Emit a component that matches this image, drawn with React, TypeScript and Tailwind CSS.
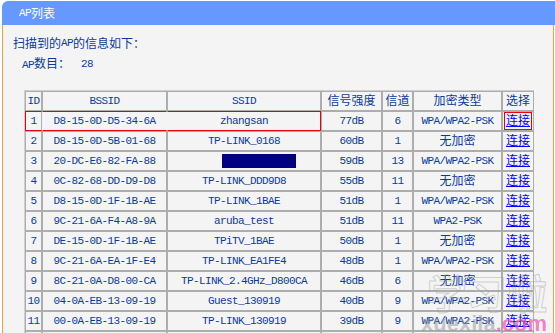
const CJK = /([\u3000-\u9fff\uff00-\uffef]+)/;

// split text into latin (mono) and CJK runs so each gets its own font/size
function Txt({ s }: { s: string }) {
  const parts = s.split(CJK).filter(Boolean);
  return (
    <>
      {parts.map((p, i) =>
        CJK.test(p) ? (
          <span key={i} className="font-['Noto_Sans_CJK_SC',sans-serif] text-[12px] leading-[14px] tracking-normal">
            {p}
          </span>
        ) : (
          <span key={i}>{p}</span>
        )
      )}
    </>
  );
}

const rows = [
  ['1', 'D8-15-0D-D5-34-6A', 'zhangsan', '77dB', '6', 'WPA/WPA2-PSK'],
  ['2', 'D8-15-0D-5B-01-68', 'TP-LINK_0168', '60dB', '1', '无加密'],
  ['3', '20-DC-E6-82-FA-88', '', '59dB', '13', 'WPA/WPA2-PSK'],
  ['4', '0C-82-68-DD-D9-D8', 'TP-LINK_DDD9D8', '55dB', '11', '无加密'],
  ['5', 'D8-15-0D-1F-1B-AE', 'TP-LINK_1BAE', '51dB', '1', 'WPA/WPA2-PSK'],
  ['6', '9C-21-6A-F4-A8-9A', 'aruba_test', '51dB', '11', 'WPA2-PSK'],
  ['7', 'DE-15-0D-1F-1B-AE', 'TPiTV_1BAE', '50dB', '1', '无加密'],
  ['8', '9C-21-6A-EA-1F-E4', 'TP-LINK_EA1FE4', '48dB', '1', 'WPA/WPA2-PSK'],
  ['9', '8C-21-0A-D8-00-CA', 'TP-LINK_2.4GHz_D800CA', '46dB', '6', '无加密'],
  ['10', '04-0A-EB-13-09-19', 'Guest_130919', '40dB', '9', 'WPA/WPA2-PSK'],
  ['11', '00-0A-EB-13-09-19', 'TP-LINK_130919', '39dB', '9', 'WPA/WPA2-PSK'],
  ['12', '00-0A-EB-13-09-18', 'TP-LINK_130918', '38dB', '9', 'WPA/WPA2-PSK'],
];

const heads = ['ID', 'BSSID', 'SSID', '信号强度', '信道', '加密类型', '选择'];
const widths = ['w-[17px]', 'w-[125px]', 'w-[154px]', 'w-[61px]', 'w-[31px]', 'w-[89px]', 'w-[32px]'];

const cell = 'h-[20px] p-0 leading-[14px] text-center align-middle border border-[#adadad] whitespace-nowrap';

export default function App() {
  return (
    <div className="relative w-[555px] h-[333px] overflow-hidden bg-white pt-px pl-[2px] leading-[14px] text-[#0b3a9c] font-['Liberation_Mono','Noto_Sans_CJK_SC',monospace] text-[11px] tracking-[-0.6px]">
      {/* Title bar */}
      <div className="h-[24px] bg-[#6699ff] rounded-tl-[6px] pl-[17px] flex items-center text-white">
        <Txt s="AP列表" />
      </div>

      {/* Body */}
      <div className="w-[552px] h-[320px] bg-[#f4f4f4] border-l border-r border-[#f5a03c] pt-[10px] pl-[10px]">
        <p className="h-[16px] leading-[16px] flex items-center">
          <Txt s="扫描到的AP的信息如下：" />
        </p>
        <p className="h-[16px] mt-[5px] ml-[9px] flex items-center">
          <span className="w-[59px]">
            <Txt s="AP数目：" />
          </span>
          <span>28</span>
        </p>

        <table className="mt-[18px] ml-[11px] table-fixed border-separate border-spacing-0 border-l border-t border-[#cfcfcf]">
          <colgroup>
            {widths.map((w, i) => (
              <col key={i} className={w} />
            ))}
          </colgroup>
          <thead>
            <tr>
              {heads.map((h) => (
                <th key={h} className={`${cell} font-normal`}>
                  <Txt s={h} />
                </th>
              ))}
            </tr>
          </thead>
          <tbody>
            {rows.map((r, ri) => {
              const first = ri === 0;
              return (
                <tr key={r[0]}>
                  <td className={`${cell} ${first ? 'border-l-red-600 border-y-red-600' : ''}`}>{r[0]}</td>
                  <td className={`${cell} ${first ? 'border-y-red-600 border-x-transparent' : ''}`}>{r[1]}</td>
                  <td className={`${cell} ${first ? 'border-r-red-600 border-y-red-600 border-l-transparent' : ''}`}>
                    {r[0] === '3' ? (
                      <span className="inline-block align-middle w-[74px] h-[14px] bg-[#000080] ml-[30px]" />
                    ) : (
                      r[2]
                    )}
                  </td>
                  <td className={cell}>{r[3]}</td>
                  <td className={cell}>{r[4]}</td>
                  <td className={cell}>
                    <Txt s={r[5]} />
                  </td>
                  <td className={cell}>
                    <a
                      href="#"
                      className={`inline-block align-middle leading-[13px] text-[#0000ff] underline ${first ? 'border border-red-600 px-px' : ''}`}
                    >
                      <Txt s="连接" />
                    </a>
                  </td>
                </tr>
              );
            })}
          </tbody>
        </table>
      </div>

      {/* Watermark */}
      <div className="absolute right-[8px] bottom-[-2px] flex flex-col items-end pointer-events-none select-none tracking-normal">
        <span className="font-['Noto_Sans_CJK_SC',sans-serif] text-[40px] leading-[42px] font-bold text-transparent [-webkit-text-stroke:1px_rgba(160,160,160,0.45)]">
          学习啦
        </span>
        <span className="font-['Liberation_Sans',sans-serif] text-[22px] leading-[22px] font-bold">
          <span className="text-[rgba(150,150,150,0.5)]">xuexila</span>
          <span className="text-[rgba(240,80,170,0.7)]">.com</span>
        </span>
      </div>
    </div>
  );
}
